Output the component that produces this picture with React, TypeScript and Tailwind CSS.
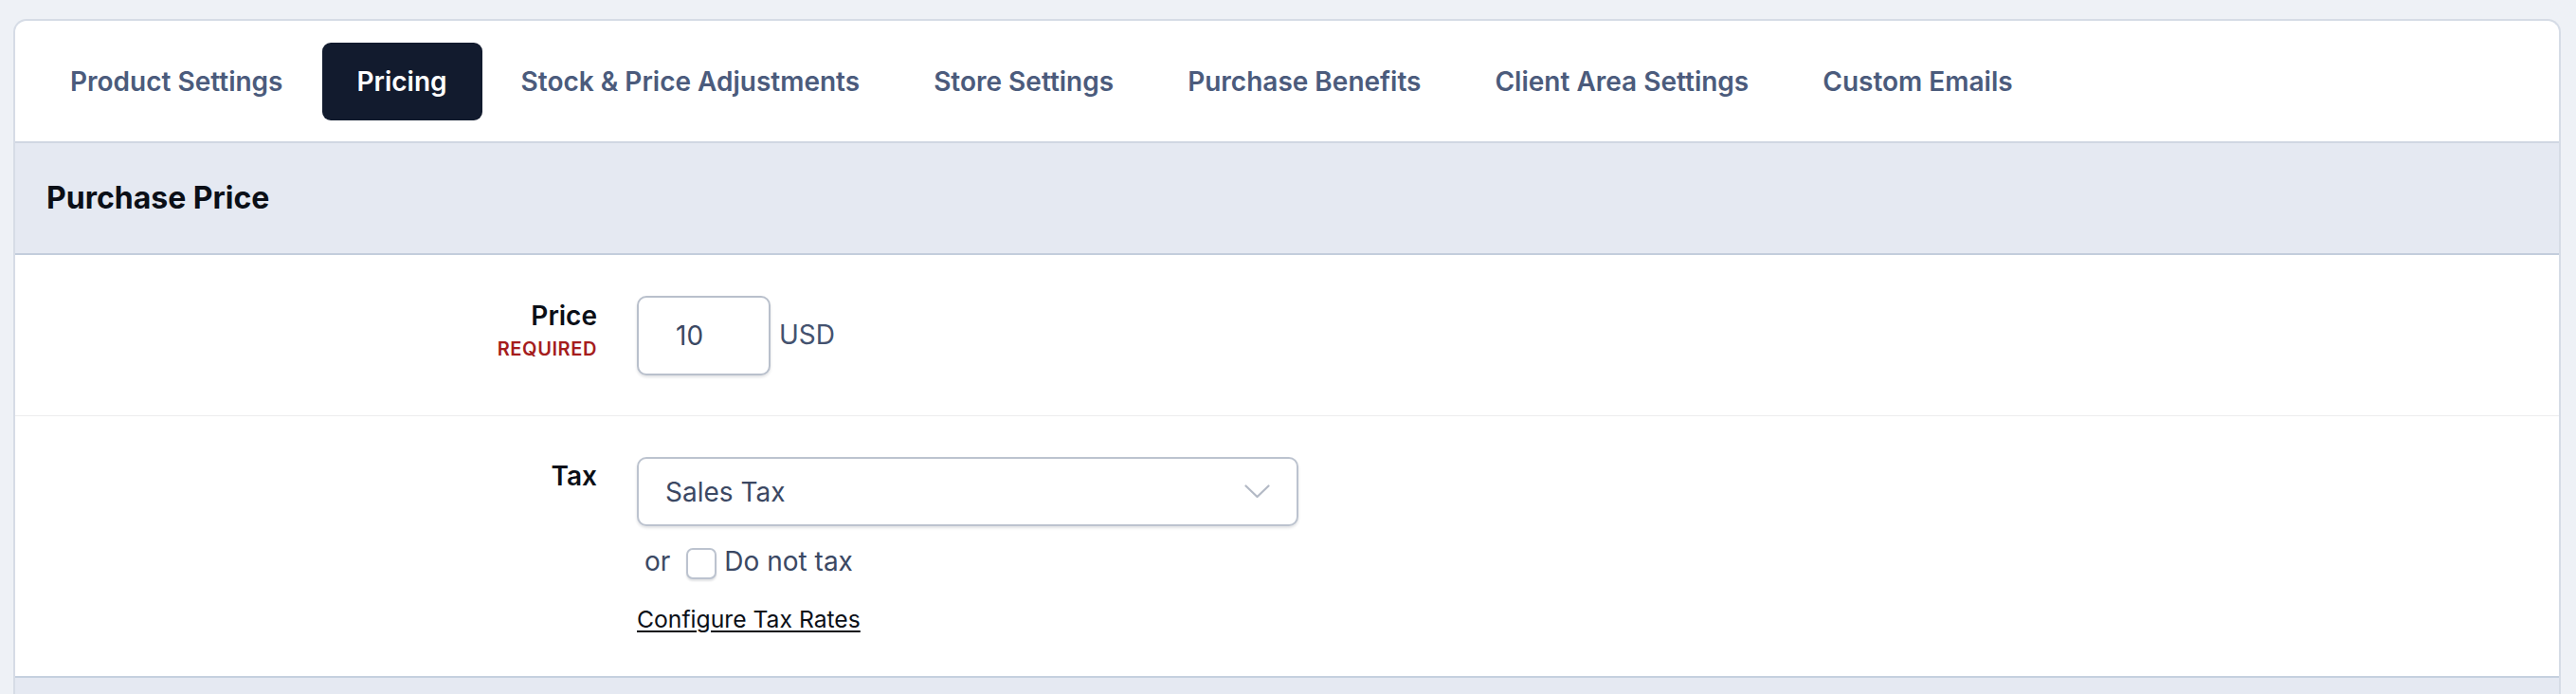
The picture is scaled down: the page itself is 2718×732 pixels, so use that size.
import React from "react";

const tabs = [
  "Product Settings",
  "Pricing",
  "Stock & Price Adjustments",
  "Store Settings",
  "Purchase Benefits",
  "Client Area Settings",
  "Custom Emails",
];

export default function App() {
  return (
    <div
      className="min-h-[732px] w-full bg-[#eef1f6] pt-[20px] pl-[14px] pr-[16px]"
      style={{ fontFamily: "Inter, 'Noto Sans', sans-serif" }}
    >
      <div className="rounded-t-[14px] border-2 border-b-0 border-[#d6dce6] bg-white overflow-hidden">
        {/* Tabs */}
        <div className="flex h-[129px] items-center gap-[4px] px-[21px] border-b-2 border-[#d0d7e2]">
          {tabs.map((t) => (
            <div
              key={t}
              className={
                t === "Pricing"
                  ? "flex h-[82px] items-center rounded-[9px] bg-[#121b2e] px-[37px] text-[28px] font-semibold text-white"
                  : "flex h-[82px] items-center rounded-[9px] px-[37px] text-[28px] font-semibold text-[#4b5b7c]"
              }
            >
              {t}
            </div>
          ))}
        </div>

        {/* Section header */}
        <div className="flex h-[118px] items-center bg-[#e5e9f2] pl-[33px] border-b-2 border-[#c3cddc]">
          <span className="text-[32px] font-bold text-[#0b0f17]">Purchase Price</span>
        </div>

        {/* Price row */}
        <div className="flex items-start gap-[42px] pt-[43px] pb-[42px] border-b border-[#ececee]">
          <div className="flex w-[614px] flex-col items-end">
            <span className="text-[28px] leading-[42px] font-semibold text-[#0b0f17]">Price</span>
            <span className="text-[20px] leading-[28px] font-semibold tracking-[0.6px] text-[#a51c1c]">
              REQUIRED
            </span>
          </div>
          <div className="flex items-center gap-[9px]">
            <div className="flex h-[84px] w-[141px] items-center rounded-[10px] border-2 border-[#b9c0cc] bg-white pl-[39px] shadow-[0_2px_3px_rgba(15,23,42,0.12)]">
              <span className="text-[28px] text-[#3b4863]">10</span>
            </div>
            <span className="text-[28px] text-[#44526f] -mt-[3px]">USD</span>
          </div>
        </div>

        {/* Tax row */}
        <div className="flex items-start gap-[42px] pt-[43px] pb-[42px] border-b-2 border-[#c5d0df]">
          <div className="flex w-[614px] flex-col items-end">
            <span className="text-[28px] leading-[42px] -mt-[1px] font-semibold text-[#0b0f17]">Tax</span>
          </div>
          <div className="flex flex-col items-start">
            <div className="flex h-[73px] w-[698px] items-center justify-between rounded-[10px] border-2 border-[#bcc3cf] bg-white pl-[28px] pr-[28px] shadow-[0_2px_3px_rgba(15,23,42,0.12)]">
              <span className="text-[28px] text-[#3b4863]">Sales Tax</span>
              <svg width="27" height="15" viewBox="0 0 27 15" fill="none">
                <path
                  d="M1.5 1.5 L13.5 13 L25.5 1.5"
                  stroke="#b3b9c5"
                  strokeWidth="2.2"
                  strokeLinecap="round"
                  strokeLinejoin="round"
                />
              </svg>
            </div>
            <div className="mt-[18px] flex h-[42px] items-center pl-[8px]">
              <span className="text-[28px] text-[#3b4863] -mt-[4px]">or</span>
              <div className="ml-[17px] h-[33px] w-[32px] rounded-[7px] border-2 border-[#bcc3cf] bg-white shadow-[0_2px_2px_rgba(15,23,42,0.12)]" />
              <span className="ml-[8px] text-[28px] text-[#3b4863] -mt-[4px]">Do not tax</span>
            </div>
            <a
              href="#"
              className="mt-[20px] text-[24.7px] leading-[36px] text-[#0b0f17] underline underline-offset-[3px]"
            >
              Configure Tax Rates
            </a>
          </div>
        </div>

        {/* Next section header (cut off) */}
        <div className="h-[116px] bg-[#e5e9f2]" />
      </div>
    </div>
  );
}
